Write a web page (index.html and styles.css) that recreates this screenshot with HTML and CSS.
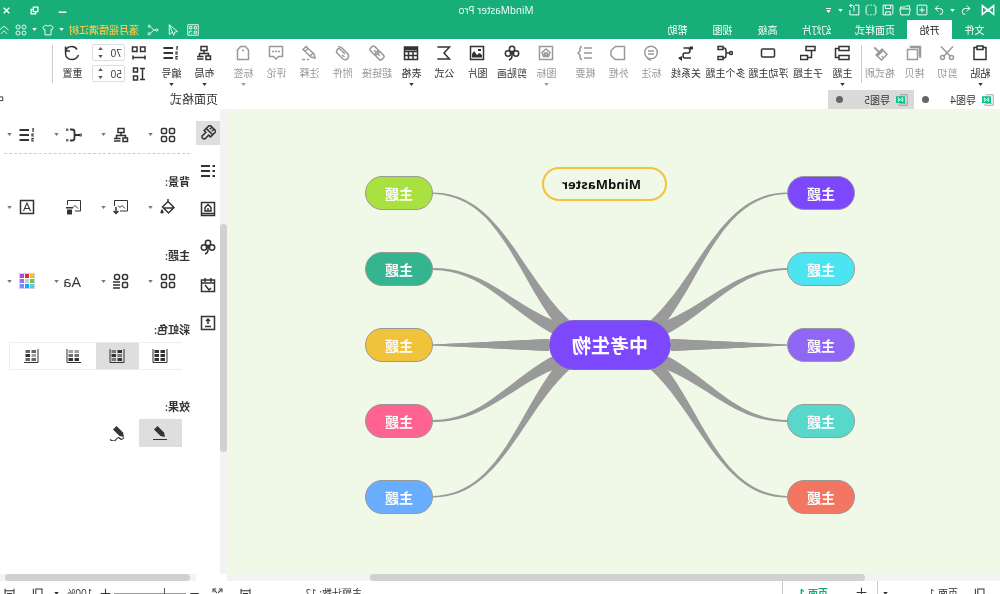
FILE: index.html
```html
<!DOCTYPE html>
<html lang="zh-CN">
<head>
<meta charset="utf-8">
<title>MindMaster Pro</title>
<link rel="stylesheet" href="styles.css">
</head>
<body>
<svg class="sprite" aria-hidden="true">
  <symbol id="logo" viewBox="0 0 16 16"><path d="M1.500 13V3l6.500 6 6.500-6v10L8 7.500zM1.500 3l13 10M14.500 3l-13 10" fill="none" stroke="currentColor" stroke-width="1.600"/></symbol>
  <symbol id="undo" viewBox="0 0 16 16"><path d="M7 2 3 6l4 4M3 6h6q4 0 4 4t-4 4"/></symbol>
  <symbol id="redo" viewBox="0 0 16 16"><path d="m9 2 4 4-4 4M13 6H7q-4 0-4 4t4 4"/></symbol>
  <symbol id="new" viewBox="0 0 16 16"><rect x="1.500" y="1.500" width="13" height="13" rx="1"/><path d="M8 4.500v7M4.500 8h7"/></symbol>
  <symbol id="open" viewBox="0 0 16 16"><path d="M2 6V2.500h4l1.500 1.500H14v2M1 6.500h14l-1.500 8h-11z"/></symbol>
  <symbol id="save" viewBox="0 0 16 16"><path d="M1.500 1.500h13v13h-11l-2-2zM4.500 1.500V6h7V1.500M5 14v-3.500h6V14"/></symbol>
  <symbol id="frame" viewBox="0 0 16 16"><path d="M5 1.500H3.500l-2 2v9l2 2H5M11 1.500h1.500l2 2v9l-2 2H11M7 1.500h2M7 14.500h2"/></symbol>
  <symbol id="export" viewBox="0 0 16 16"><path d="M7 1.500H1.500v13h12V8M8 10V4q0-2 2-2h3M11 0l3 2-3 3"/></symbol>
  <symbol id="paste" viewBox="0 0 16 16"><path d="M5 2.500H2v12h12v-12h-3M5 1h6v3.500H5z"/></symbol>
  <symbol id="cut" viewBox="0 0 16 16"><path d="m2 1.500 9 9.500M14 1.500 5 11"/><circle cx="3.500" cy="12.500" r="2"/><circle cx="12.500" cy="12.500" r="2"/></symbol>
  <symbol id="copy" viewBox="0 0 16 16"><path d="M3 12H1.500V1.500h10V3M1.500 2.500h10M2.500 2v9"/><rect x="4.500" y="4.500" width="10" height="10"/></symbol>
  <symbol id="brush" viewBox="0 0 16 16"><g transform="rotate(45 8 8)"><path class="f" d="M3 6h10v3H3zM7 0h2v6H7z"/><path d="M4 9v5h8V9"/><path d="M9 14v-3" stroke-width="1"/></g></symbol>
  <symbol id="topic" viewBox="0 0 16 16"><rect x="1" y="1.500" width="10" height="4"/><rect x="1" y="10.500" width="10" height="4"/><path d="M11 3.500h3.500v9H11"/></symbol>
  <symbol id="sub" viewBox="0 0 16 16"><rect x="1" y="1.500" width="9" height="4"/><rect x="8.500" y="10.500" width="7" height="4"/><path d="M4.500 6v6.500h4"/></symbol>
  <symbol id="float" viewBox="0 0 16 16"><rect x="1.500" y="4" width="13" height="8" rx="1"/></symbol>
  <symbol id="multi" viewBox="0 0 16 16"><rect x="10" y="1.500" width="5" height="3"/><rect x="10" y="11.500" width="5" height="3"/><circle cx="2" cy="8" r="1.500"/><path d="M3.500 8H7M10 3H9Q7 3 7 6v4q0 3 2 3h1"/></symbol>
  <symbol id="relation" viewBox="0 0 16 16"><path d="M2 3h8.500M10 3H6Q4 3 4 5.500T6 8h3q2 0 2 2.500T9 13H3M13 13h2"/><path class="f" d="M1 1.500h3v3H1zM12 11l4 2-4 3z"/></symbol>
  <symbol id="callout" viewBox="0 0 16 16"><circle cx="8" cy="7.500" r="6.300"/><path d="M5 6h6M5 9h6M9 13v2l3-2"/></symbol>
  <symbol id="boundary" viewBox="0 0 16 16"><path d="M1.500 1.500h9l4.500 4v5l-4 4H1.500z"/></symbol>
  <symbol id="summary" viewBox="0 0 16 16"><path d="M1 3h8M1 8h8M1 13h8M11 1.500q2 0 2 3V6l2 2-2 2v1.500q0 3-2 3"/></symbol>
  <symbol id="mark" viewBox="0 0 16 16"><rect x="1.500" y="1.500" width="13" height="13"/><path d="m8 4 4 3.500-1.500 4h-5L4 7.500zM6.500 8h3v2h-3z"/></symbol>
  <symbol id="clover" viewBox="0 0 16 16"><circle cx="8" cy="4" r="2.700"/><circle cx="4" cy="8.500" r="2.700"/><circle cx="12" cy="8.500" r="2.700"/><path d="M8 6v5q0 3 3 4M8 7 6 9M8 7l2 2"/></symbol>
  <symbol id="picture" viewBox="0 0 16 16"><rect x="1.500" y="1.500" width="13" height="13"/><path class="f" d="M3 12.500V10l2.500-2L8 10l3-4 2 3v3.500zM4 4h3v2H4z"/></symbol>
  <symbol id="sigma" viewBox="0 0 16 16"><path d="M14 2.500V2H2.500L8 8l-5.500 6H14v-.5"/></symbol>
  <symbol id="table" viewBox="0 0 16 16"><path d="M1.500 2h13v12.500h-13zM1.500 6.500h13M1.500 10.500h13M6 6v8M10.500 6v8M2 3h12M2 4.500h12"/></symbol>
  <symbol id="link" viewBox="0 0 16 16"><g transform="rotate(-45 8 8)"><rect x="0" y="5" width="9" height="6" rx="2"/><rect x="7" y="5" width="9" height="6" rx="2"/><path d="M4 8h8"/></g></symbol>
  <symbol id="clip" viewBox="0 0 16 16"><path d="m5 9 5-5q2-1 3 1t0 3l-6 6q-3 2-5-1-1-2 0-4l6-6q2-2 4-1M8 10 5.500 12"/></symbol>
  <symbol id="note" viewBox="0 0 16 16"><path d="m2 13 1-4 8-7.500 3 3L6 12zM9 3.500l3 3M4 8l3 3M8 14.500h2M12 14.500h3"/></symbol>
  <symbol id="comment" viewBox="0 0 16 16"><path d="M1.500 1.500h13v10h-4L8 14l-2.500-2.500h-4zM4 6.500h2M7 6.500h2M10 6.500h2"/></symbol>
  <symbol id="tag" viewBox="0 0 16 16"><path d="M2.500 5 5.500 1.500h5l3 3.500v9.500h-11zM7 5.500h2"/></symbol>
  <symbol id="layout" viewBox="0 0 16 16"><rect x="5" y="1.500" width="6" height="4"/><rect x="1.500" y="11" width="4.500" height="3.500"/><path d="M8 5.500v3M3.500 11V8.500h9V11M8.500 11.500H15M8.500 14H15"/></symbol>
  <symbol id="number" viewBox="0 0 16 16"><path d="M6 3h9.500M6 8h9.500M6 13h9.500" stroke-width="2.200"/><path d="M2 1v4M1 2h1M1 7h2v2H1M1 11.500h2V14H1" stroke-width="1.200"/></symbol>
  <symbol id="hgap" viewBox="0 0 16 16"><rect x="2" y="2" width="4.500" height="4.500"/><rect x="10" y="2" width="4.500" height="4.500"/><path d="M2 12.500h12M2 10.500v4M14 10.500v4"/></symbol>
  <symbol id="vgap" viewBox="0 0 16 16"><rect x="9.500" y="2" width="4" height="4"/><rect x="9.500" y="10" width="4" height="4"/><path d="M2 2.500h5M2 13.500h5M4.500 2.500v11"/></symbol>
  <symbol id="reset" viewBox="0 0 16 16"><path d="M3 4.500Q5 1.500 8 1.500q6.500 0 6.500 6.500T8 14.500Q3.500 14.500 1.500 10M14.500 1.500V6h-4.500"/></symbol>
  <symbol id="four" viewBox="0 0 16 16"><rect x="1.500" y="1.500" width="5" height="5" rx="1"/><rect x="9.500" y="1.500" width="5" height="5" rx="1"/><rect x="1.500" y="9.500" width="5" height="5" rx="1"/><rect x="9.500" y="9.500" width="5" height="5" rx="1"/></symbol>
  <symbol id="themes" viewBox="0 0 16 16"><rect x="1.500" y="1.500" width="5" height="5" rx="2"/><rect x="9.500" y="1.500" width="5" height="5" rx="2"/><rect x="1.500" y="9.500" width="5" height="5" rx="1"/><path d="M9 9h7M9 12h7M9 15h7"/></symbol>
  <symbol id="branch" viewBox="0 0 16 16"><path d="M2 8h5M12 2.500h-2q-2.500 0-2.500 2.500v6q0 2.500 2.500 2.500h2" stroke-width="1.800"/><path class="f" d="M13.500 1.500h2.500v2.500h-2.500zM13.500 12h2.500v2.500h-2.500zM0 6.500h2.500v3H0z" opacity=".7"/></symbol>
  <symbol id="fill" viewBox="0 0 16 16"><path d="m2 8.500 6-6 5.500 5.500-6 6zM8 2.500V0M2 9h11"/><path class="f" d="M14 10q3 4 0 4.500-3-.5 0-4.500z"/></symbol>
  <symbol id="picdown" viewBox="0 0 16 16"><path d="M9 12H1.500V1.500h13V7M4 9.500l3-3 2 2 2-2" stroke-width="1"/><path d="M13 8v6M10.500 12l2.500 2.500 2.500-2.500"/></symbol>
  <symbol id="picdel" viewBox="0 0 16 16"><path d="M7 12H1.500V1.500h13V6M4 9.500l3-3 2 2" stroke-width="1"/><path class="f" d="M9 8h7v1.500H9zM10 10.500h5v5h-5z"/></symbol>
  <symbol id="lettera" viewBox="0 0 16 16"><path d="M1.500 1.500h13v13h-13z"/><path d="m4.500 12 3.500-8 3.500 8M5.500 9.500h5" stroke-width="1.100"/></symbol>
  <symbol id="style" viewBox="0 0 16 16"><g transform="rotate(-45 8 8)"><path d="M3.500 1h9v8H10v5.500q-2 2-4 0V9H3.500zM3.500 6h9M6.500 1v3M9.500 1v3"/></g></symbol>
  <symbol id="list" viewBox="0 0 16 16"><path d="M6 3h9M6 8h9M6 13h9M1 3h2.500M1 8h2.500M1 13h2.500" stroke-width="2"/></symbol>
  <symbol id="book" viewBox="0 0 16 16"><path d="M1.500 1.500h13v13h-13zM1.500 12.500h13M5 10V6.500l3-3 3 3V10zM8 7v3"/></symbol>
  <symbol id="calendar" viewBox="0 0 16 16"><path d="M1.500 3h13v11.500h-13zM1.500 6h13M5 1v4M11 1v4M5 11l2 2 4-5"/></symbol>
  <symbol id="upload" viewBox="0 0 16 16"><path d="M1.500 1.500h13v13h-13zM8 9V4M6 6l2-2 2 2M5 11.500h6"/></symbol>
  <symbol id="cells" viewBox="0 0 16 16"><path d="M1 1v13.500h14V1" stroke-width="1"/><path class="f" d="M3 2h4.500v3H3zM9 2h4.500v3H9zM3 6h4.500v3H3zM9 6h4.500v3H9zM3 10h4.500v3H3zM9 10h4.500v3H9z"/></symbol>
  <symbol id="cellsmix" viewBox="0 0 16 16"><path d="M1 1v13.500h14V1" stroke-width="1"/><path class="f" d="M9 2h4.500v3H9zM3 6h4.500v3H3zM9 10h4.500v3H9z" opacity=".6"/><path class="f" d="M3 2h4.500v3H3zM9 6h4.500v3H9zM3 10h4.500v3H3z"/></symbol>
  <symbol id="cellsrow" viewBox="0 0 16 16"><path d="M1 14.500h14V1" stroke-width="1"/><path class="f" d="M3 2h4.500v3H3zM9 2h4.500v3H9z" opacity=".45"/><path class="f" d="M3 6h4.500v3H3zM9 6h4.500v3H9z" opacity=".7"/><path class="f" d="M3 10h4.500v3H3zM9 10h4.500v3H9z"/></symbol>
  <symbol id="cellscol" viewBox="0 0 16 16"><path d="M1 1v13.500h14" stroke-width="1"/><path class="f" d="M3 6h4.500v3H3z" opacity=".45"/><path class="f" d="M3 2h4.500v3H3zM9 2h4.500v3H9zM3 10h4.500v3H3zM9 10h4.500v3H9z" opacity=".75"/><path class="f" d="M9 6h4.500v3H9z"/></symbol>
  <symbol id="pencil" viewBox="0 0 16 16"><path class="f" d="m3 12 1-4.500 6.500-6.500 3.500 3.500-6.500 6.500z"/><path d="M1 14.500h14" stroke-width="1"/></symbol>
  <symbol id="scribble" viewBox="0 0 16 16"><path class="f" d="m1 12 1-4.500 6.500-6.500 3.500 3.500-6.500 6.500z"/><path d="M1 12.500q2 3 4 1t4 1 6 0" stroke-width="1.200"/></symbol>
  <symbol id="share" viewBox="0 0 16 16"><circle cx="3" cy="8" r="1.500"/><circle cx="13" cy="3" r="1.500"/><circle cx="13" cy="13" r="1.500"/><path d="M4.500 8H7l4.500-4.500M7 8l4.500 4.500"/></symbol>
  <symbol id="send" viewBox="0 0 16 16"><path d="M13 1 2 10l4 1 1 4zM13 1v13l-4-3"/></symbol>
  <symbol id="qr" viewBox="0 0 16 16"><path d="M1 1h14v14H1zM3.500 6.500v-3h3v3zM9.500 6.500v-3h3v3zM3.500 12.500v-3h3v3zM9 9.500h3.500v3M9 12.500h1"/></symbol>
  <symbol id="shirt" viewBox="0 0 16 16"><path d="m5 1.500-4 3L3 8l1-.5v7h8v-7l1 .5 2-3.500-4-3Q8 4.500 5 1.500z"/></symbol>
  <symbol id="apps" viewBox="0 0 16 16"><circle cx="4" cy="4" r="2.700"/><circle cx="12" cy="4" r="2.700"/><circle cx="4" cy="12" r="2.700"/><circle cx="12" cy="12" r="2.700"/></symbol>
  <symbol id="up" viewBox="0 0 16 16"><path d="m2 8 6-5 6 5M4 13l4-4 4 4"/></symbol>
  <symbol id="min" viewBox="0 0 16 16"><path d="M1 11h14" stroke-width="2.500"/></symbol>
  <symbol id="restore" viewBox="0 0 16 16"><path d="M2 2h8v8H2zM10 6h4v8H6v-4" stroke-width="2.400"/></symbol>
  <symbol id="close" viewBox="0 0 16 16"><path d="m3 3 10 10M13 3 3 13" stroke-width="2.600"/></symbol>
  <symbol id="doc" viewBox="0 0 16 16"><path d="M12 13v2H1V1h10" stroke="#888" stroke-width="1"/><path d="M3 12.500h8" stroke="#888" stroke-width="1"/><rect class="g" x="4" y="3" width="12" height="9"/><path d="M7 10V5l3 2.500L13 5v5L10 7.500z" stroke="#fff" stroke-width="1.100"/></symbol>
  <symbol id="caret" viewBox="0 0 6 4"><path class="f" d="M0 0h6L3 4z"/></symbol>
  <symbol id="caretup" viewBox="0 0 6 4"><path class="f" d="M0 4h6L3 0z"/></symbol>
  <symbol id="plus" viewBox="0 0 16 16"><path d="M8 1v14M1 8h14"/></symbol>
  <symbol id="minus" viewBox="0 0 16 16"><path d="M2 8h12"/></symbol>
  <symbol id="pages" viewBox="0 0 16 16"><path d="M1.500 1.500h9v13h-9zM14 1v14"/></symbol>
  <symbol id="fit" viewBox="0 0 16 16"><path d="M1.500 15V1M14.500 15V1M1.500 4h13M5 8h6v4H5z"/></symbol>
  <symbol id="full" viewBox="0 0 16 16"><path d="M1.500 6V1.500H6M10 1.500h4.500V6M1.500 10v4.500H6M10 14.500h4.500V10M5 5l2 2M11 5 9 7M3 3l2 2M13 3l-2 2"/></symbol>
  <symbol id="pin" viewBox="0 0 16 16"><path d="M2 3h12v6H2zM8 9v6"/></symbol>
</svg>

<div class="app">
  <header class="titlebar">
    <div class="quick">
      <svg class="ic logo"><use href="#logo"/></svg>
      <button aria-label="撤销"><svg class="ic"><use href="#undo"/></svg></button>
      <svg class="caret"><use href="#caret"/></svg>
      <button aria-label="重做"><svg class="ic"><use href="#redo"/></svg></button>
      <button aria-label="新建"><svg class="ic"><use href="#new"/></svg></button>
      <button aria-label="打开"><svg class="ic"><use href="#open"/></svg></button>
      <button aria-label="保存"><svg class="ic"><use href="#save"/></svg></button>
      <button aria-label="打印"><svg class="ic"><use href="#frame"/></svg></button>
      <button aria-label="导出"><svg class="ic"><use href="#export"/></svg></button>
      <svg class="caret"><use href="#caret"/></svg>
      <button class="more" aria-label="更多"><svg class="caret"><use href="#caret"/></svg></button>
    </div>
    <h1>MindMaster Pro</h1>
    <div class="window">
      <button aria-label="最小化"><svg class="ic"><use href="#min"/></svg></button>
      <button aria-label="还原"><svg class="ic"><use href="#restore"/></svg></button>
      <button aria-label="关闭"><svg class="ic"><use href="#close"/></svg></button>
    </div>
  </header>
  <nav class="menu">
    <div class="tabs">
      <button>文件</button>
      <button class="on">开始</button>
      <button class="w4">页面样式</button>
      <button class="w3">幻灯片</button>
      <button>高级</button>
      <button>视图</button>
      <button>帮助</button>
    </div>
    <div class="account">
      <div class="links">
        <button aria-label="二维码"><svg class="ic"><use href="#qr"/></svg></button>
        <button aria-label="发送"><svg class="ic"><use href="#send"/></svg></button>
        <button aria-label="分享"><svg class="ic"><use href="#share"/></svg></button>
      </div>
      <button class="user">落月摇情满江树</button>
      <svg class="caret"><use href="#caret"/></svg>
      <button aria-label="皮肤"><svg class="ic"><use href="#shirt"/></svg></button>
      <svg class="caret"><use href="#caret"/></svg>
      <button aria-label="应用"><svg class="ic"><use href="#apps"/></svg></button>
      <button class="fold" aria-label="收起"><svg class="ic"><use href="#up"/></svg></button>
    </div>
  </nav>

  <div class="ribbon">
    <div class="group clipboard">
      <button><svg class="ic"><use href="#paste"/></svg>粘贴<svg class="caret"><use href="#caret"/></svg></button>
      <button class="off"><svg class="ic"><use href="#cut"/></svg>剪切</button>
      <button class="off"><svg class="ic"><use href="#copy"/></svg>拷贝</button>
      <button class="off w3"><svg class="ic"><use href="#brush"/></svg>格式刷</button>
    </div>
    <div class="group topics">
      <button><svg class="ic"><use href="#topic"/></svg>主题<svg class="caret"><use href="#caret"/></svg></button>
      <button class="w3"><svg class="ic"><use href="#sub"/></svg>子主题</button>
      <button class="w4"><svg class="ic"><use href="#float"/></svg>浮动主题</button>
      <button class="w4"><svg class="ic"><use href="#multi"/></svg>多个主题</button>
      <button class="w3"><svg class="ic"><use href="#relation"/></svg>关系线</button>
      <button class="off"><svg class="ic"><use href="#callout"/></svg>标注</button>
      <button class="off"><svg class="ic"><use href="#boundary"/></svg>外框</button>
      <button class="off"><svg class="ic"><use href="#summary"/></svg>概要</button>
    </div>
    <div class="group insert">
      <button class="off"><svg class="ic"><use href="#mark"/></svg>图标<svg class="caret"><use href="#caret"/></svg></button>
      <button class="w3"><svg class="ic"><use href="#clover"/></svg>剪贴画</button>
      <button><svg class="ic"><use href="#picture"/></svg>图片</button>
      <button><svg class="ic"><use href="#sigma"/></svg>公式</button>
      <button><svg class="ic"><use href="#table"/></svg>表格<svg class="caret"><use href="#caret"/></svg></button>
      <button class="off w3"><svg class="ic"><use href="#link"/></svg>超链接</button>
      <button class="off"><svg class="ic"><use href="#clip"/></svg>附件</button>
      <button class="off"><svg class="ic"><use href="#note"/></svg>注释</button>
      <button class="off"><svg class="ic"><use href="#comment"/></svg>评论</button>
      <button class="off"><svg class="ic"><use href="#tag"/></svg>标签<svg class="caret"><use href="#caret"/></svg></button>
    </div>
    <div class="group arrange">
      <button><svg class="ic"><use href="#layout"/></svg>布局<svg class="caret"><use href="#caret"/></svg></button>
      <button><svg class="ic"><use href="#number"/></svg>编号<svg class="caret"><use href="#caret"/></svg></button>
      <div class="spacing">
        <label><svg class="ic"><use href="#hgap"/></svg><span class="spin"><input type="text" value="70" aria-label="水平间距"><span class="arrows"><svg class="caret"><use href="#caretup"/></svg><svg class="caret"><use href="#caret"/></svg></span></span></label>
        <label><svg class="ic"><use href="#vgap"/></svg><span class="spin"><input type="text" value="50" aria-label="垂直间距"><span class="arrows"><svg class="caret"><use href="#caretup"/></svg><svg class="caret"><use href="#caret"/></svg></span></span></label>
      </div>
      <button><svg class="ic"><use href="#reset"/></svg>重置</button>
    </div>
  </div>

  <main class="work">
    <section class="editor">
      <div class="docs">
        <button><svg class="ic"><use href="#doc"/></svg>导图4<i></i></button>
        <button class="on"><svg class="ic"><use href="#doc"/></svg>导图5<i></i></button>
      </div>
      <div class="canvas">
        <svg class="lines" viewBox="-390 -236 772 465" aria-hidden="true">
          <defs>
            <g id="arms">
              <path d="M177-152.500C110-152.500 90-70 40-24L30-10H48L57-24C95-75 113-149 177-151z"/>
              <path d="M177-77C125-77 100-42 55-24L35-10 59-12C105-38 127-74 177-75z"/>
              <path d="M177-.5 61-6V6L177 .5z"/>
            </g>
          </defs>
          <use href="#arms"/>
          <use href="#arms" transform="scale(-1 1)"/>
          <use href="#arms" transform="scale(1 -1)"/>
          <use href="#arms" transform="scale(-1 -1)"/>
        </svg>
        <div class="node float">MindMaster</div>
        <div class="node root">中考生物</div>
        <div class="node l r1 violet">主题</div>
        <div class="node l r2 cyan">主题</div>
        <div class="node l r3 purple">主题</div>
        <div class="node l r4 teal">主题</div>
        <div class="node l r5 coral">主题</div>
        <div class="node r r1 lime">主题</div>
        <div class="node r r2 green">主题</div>
        <div class="node r r3 gold">主题</div>
        <div class="node r r4 pink">主题</div>
        <div class="node r r5 blue">主题</div>
      </div>
      <div class="hscroll"><span></span></div>
    </section>

    <aside class="panel">
      <header><h2>页面格式</h2><svg class="ic"><use href="#pin"/></svg></header>
      <div class="body">
        <div class="vscroll"><span></span></div>
        <div class="rail">
          <button class="on" aria-label="格式"><svg class="ic"><use href="#style"/></svg></button>
          <button aria-label="大纲"><svg class="ic"><use href="#list"/></svg></button>
          <button aria-label="图标"><svg class="ic"><use href="#book"/></svg></button>
          <button aria-label="剪贴画"><svg class="ic"><use href="#clover"/></svg></button>
          <button aria-label="任务"><svg class="ic"><use href="#calendar"/></svg></button>
          <button aria-label="导出"><svg class="ic"><use href="#upload"/></svg></button>
        </div>
        <div class="format">
          <div class="row first">
            <button aria-label="结构"><svg class="ic"><use href="#four"/></svg><svg class="caret"><use href="#caret"/></svg></button>
            <button aria-label="布局"><svg class="ic"><use href="#layout"/></svg><svg class="caret"><use href="#caret"/></svg></button>
            <button aria-label="连线"><svg class="ic"><use href="#branch"/></svg><svg class="caret"><use href="#caret"/></svg></button>
            <button aria-label="编号"><svg class="ic"><use href="#number"/></svg><svg class="caret"><use href="#caret"/></svg></button>
          </div>
          <h3>背景:</h3>
          <div class="row">
            <button aria-label="填充"><svg class="ic"><use href="#fill"/></svg><svg class="caret"><use href="#caret"/></svg></button>
            <button aria-label="插入图片"><svg class="ic"><use href="#picdown"/></svg><svg class="caret"><use href="#caret"/></svg></button>
            <button aria-label="删除图片"><svg class="ic"><use href="#picdel"/></svg></button>
            <button aria-label="水印"><svg class="ic"><use href="#lettera"/></svg><svg class="caret"><use href="#caret"/></svg></button>
          </div>
          <h3>主题:</h3>
          <div class="row">
            <button aria-label="主题"><svg class="ic"><use href="#four"/></svg><svg class="caret"><use href="#caret"/></svg></button>
            <button aria-label="主题样式"><svg class="ic"><use href="#themes"/></svg><svg class="caret"><use href="#caret"/></svg></button>
            <button aria-label="字体"><span class="aa">Aa</span><svg class="caret"><use href="#caret"/></svg></button>
            <button aria-label="颜色"><span class="swatch"><i></i><i></i><i></i><i></i><i></i><i></i><i></i><i></i><i></i></span><svg class="caret"><use href="#caret"/></svg></button>
          </div>
          <h3>彩虹色:</h3>
          <div class="choices boxed">
            <button aria-label="单色"><svg class="ic"><use href="#cells"/></svg></button>
            <button class="on" aria-label="彩虹一"><svg class="ic"><use href="#cellsmix"/></svg></button>
            <button aria-label="彩虹二"><svg class="ic"><use href="#cellsrow"/></svg></button>
            <button aria-label="彩虹三"><svg class="ic"><use href="#cellscol"/></svg></button>
          </div>
          <h3>效果:</h3>
          <div class="choices">
            <button class="on" aria-label="普通"><svg class="ic"><use href="#pencil"/></svg></button>
            <button aria-label="手绘"><svg class="ic"><use href="#scribble"/></svg></button>
          </div>
        </div>
      </div>
      <div class="hscroll"><span></span></div>
    </aside>
  </main>

  <footer class="status">
    <div class="pages">
      <svg class="ic"><use href="#pages"/></svg>
      <span>页面-1</span>
      <svg class="caret"><use href="#caret"/></svg>
      <button class="add" aria-label="新增页面"><svg class="ic"><use href="#plus"/></svg></button>
      <button class="current">页面-1</button>
    </div>
    <div class="tools">
      <span class="count">主题计数: 12</span>
      <div class="view">
        <button aria-label="适合宽度"><svg class="ic"><use href="#fit"/></svg></button>
        <button aria-label="全屏"><svg class="ic"><use href="#full"/></svg></button>
      </div>
      <div class="zoom">
        <button aria-label="缩小"><svg class="ic"><use href="#minus"/></svg></button>
        <input type="range" min="0" max="100" value="30" aria-label="缩放">
        <button aria-label="放大"><svg class="ic"><use href="#plus"/></svg></button>
      </div>
      <span>100%</span>
      <svg class="caret"><use href="#caret"/></svg>
      <div class="view">
        <button aria-label="视图"><svg class="ic"><use href="#pages"/></svg></button>
        <button aria-label="定位"><svg class="ic"><use href="#fit"/></svg></button>
      </div>
    </div>
  </footer>
</div>
</body>
</html>
```
FILE: styles.css
```css
* { box-sizing: border-box; }

body {
  margin: 0;
  overflow: hidden;
  background: #fff;
  color: #333;
  font: 10px/14px "Open Sans", "Noto Sans CJK SC", sans-serif;
}

button {
  padding: 0;
  border: 0;
  background: none;
  color: inherit;
  font: inherit;
  white-space: nowrap;
}

h1, h2, h3 { margin: 0; font-weight: 400; }

.sprite { position: absolute; width: 0; height: 0; }

/* The whole interface is shown flipped left to right. */
.app {
  display: flex;
  flex-direction: column;
  height: 100vh;
  overflow: hidden;
  transform: scaleX(-1);
}

.ic {
  display: block;
  flex: none;
  width: 16px;
  height: 16px;
  fill: none;
  stroke: currentColor;
  stroke-width: 1.5;
}
.caret {
  display: block;
  flex: none;
  width: 5px;
  height: 3px;
}
.f { fill: currentColor; stroke: none; }
.g { fill: #0bbd87; stroke: none; }

/* Title bar and menu */
.titlebar {
  display: grid;
  grid-template-columns: 1fr auto 1fr;
  align-items: center;
  height: 20px;
  background: #17ae79;
  color: #fff;
}
.titlebar .ic { width: 12px; height: 12px; stroke-width: 1.3; }
.titlebar h1 { padding-left: 8px; font-size: 10px; line-height: 20px; }
.quick { display: flex; align-items: center; gap: 5px; padding-left: 5px; }
.quick .logo { width: 14px; height: 14px; margin-right: 4px; }
.more { padding-top: 1px; border-top: 1px solid #fff; margin-left: 2px; }
.window { display: flex; justify-content: flex-end; gap: 19px; padding-right: 2px; }
.titlebar .window .ic { width: 9px; height: 9px; }

.menu {
  display: flex;
  justify-content: space-between;
  height: 19px;
  background: #17ae79;
  color: #fff;
}
.tabs { display: flex; padding-left: 3px; }
.tabs button { width: 45px; }
.tabs .w3 { width: 53px; }
.tabs .w4 { width: 64px; }
.tabs .on { background: #fff; color: #222; }
.account { display: flex; align-items: center; gap: 5px; }
.links { display: flex; gap: 8px; margin-right: 3px; }
.account .ic { width: 12px; height: 12px; stroke-width: 1.2; }
.account .user { color: #fbc94f; font-weight: 500; }
.account .fold { width: 10px; }

/* Ribbon */
.ribbon { display: flex; height: 51px; padding: 6px 0 0 3px; }
.group { display: flex; align-items: flex-start; }
.group > button {
  display: flex;
  flex-direction: column;
  align-items: center;
  width: 33px;
}
.group > .w3 { width: 36px; }
.group > .w4 { width: 43px; }
.group > button .ic { margin-bottom: 5px; }
.group > button .caret { margin-top: 3px; }
.off { color: #999; }
.clipboard, .arrange { height: 38px; border-right: 1px solid #ccc; }
.topics { margin-left: 2px; }
.insert { margin-left: 6px; }
.arrange { margin-left: 6px; padding-right: 3px; }
.spacing { display: grid; gap: 4px; margin: -1px 0 0 8px; }
.spacing label { display: flex; align-items: center; gap: 6px; }
.spin {
  display: flex;
  align-items: center;
  width: 33px;
  height: 17px;
  border: 1px solid #ddd;
  border-radius: 2px;
}
.spin input {
  width: 21px;
  padding: 0 0 0 2px;
  border: 0;
  background: none;
  color: #333;
  font: inherit;
}
.arrows { display: grid; gap: 5px; color: #555; }
.spacing + button { margin-left: 3px; }

/* Editor */
.work { display: flex; flex: 1; min-height: 0; }
.editor { display: flex; flex: 1; flex-direction: column; min-width: 0; }
.docs { display: flex; height: 19px; }
.docs button { display: flex; align-items: center; width: 86px; padding: 0 8px 0 6px; }
.docs .ic { width: 12px; height: 12px; margin-right: 6px; }
.docs .on { background: #dadada; }
.docs i {
  width: 7px;
  height: 7px;
  margin-left: auto;
  border-radius: 50%;
  background: #666;
}
.canvas {
  position: relative;
  flex: 1;
  min-height: 0;
  overflow: hidden;
  background: #f0f9e8;
}
.lines { position: absolute; top: 0; left: 0; width: 772px; height: 465px; fill: #9a9a9a; }
.node {
  position: absolute;
  width: 68px;
  height: 34px;
  border: 1px solid #999;
  border-radius: 25px;
  color: #fff;
  font-size: 14px;
  font-weight: 700;
  line-height: 34px;
  text-align: center;
}
.node.root {
  left: 329px;
  top: 211px;
  width: 122px;
  height: 50px;
  border-color: #8064c8;
  background: #7d48fb;
  font-size: 19px;
  line-height: 50px;
}
.node.float {
  left: 333px;
  top: 58px;
  width: 125px;
  border: 2px solid #f1c33b;
  padding-left: 6px;
  color: #111;
  font-size: 13px;
  line-height: 30px;
}
.l { left: 145px; }
.r { left: 567px; }
.r1 { top: 67px; }
.r2 { top: 143px; }
.r3 { top: 219px; }
.r4 { top: 295px; }
.r5 { top: 371px; }
.violet { background: #7d48fb; }
.cyan { background: #4de4f1; }
.purple { background: #8f66f5; }
.teal { background: #57d8ca; }
.coral { background: #f37663; }
.lime { background: #a9e141; }
.green { background: #35b58f; }
.gold { background: #f1c33b; }
.pink { background: #ff6490; }
.blue { background: #68adff; }

.hscroll { height: 7px; background: #f3f3f3; }
.hscroll span { display: block; height: 7px; border-radius: 4px; background: #d1d1d1; }
.editor .hscroll span { width: 64%; margin-left: 135px; }

/* Format panel */
.panel { display: flex; flex: none; flex-direction: column; width: 227px; overflow: hidden; }
.panel header { display: flex; justify-content: space-between; height: 19px; padding-left: 9px; }
.panel h2 { font-size: 12px; line-height: 20px; }
.panel header .ic { width: 10px; height: 10px; margin: 5px -6px 0 0; }
.body { display: flex; flex: 1; min-height: 0; }
.vscroll { flex: none; width: 7px; padding-top: 115px; background: #f3f3f3; }
.vscroll span { display: block; height: 228px; border-radius: 4px; background: #d1d1d1; }
.rail {
  display: flex;
  flex: none;
  flex-direction: column;
  gap: 14px;
  width: 24px;
  padding-top: 12px;
}
.rail button { display: grid; place-items: center; height: 24px; }
.on { background: #dedede; }
.format { flex: 1; min-width: 0; padding-left: 6px; }
.row { display: grid; grid-template-columns: repeat(4, 47px); height: 24px; padding-left: 14px; }
.row button { display: flex; align-items: center; gap: 7px; }
.row .caret { color: #777; }
.row.first { height: 45px; margin: 0 4px 20px 0; padding-top: 7px; border-bottom: 1px dashed #ccc; }
.format h3 { font-size: 11px; font-weight: 600; line-height: 16px; }
.row + h3 { margin-top: 20px; }
.row + h3 + .row { margin-top: 5px; }
.row + h3 + .row + h3 { margin-top: 29px; }
.aa { width: 20px; margin-right: -4px; font-size: 15px; }
.swatch {
  display: grid;
  grid-template-columns: repeat(3, 4px);
  gap: 1px;
  width: 16px;
  height: 16px;
  border: 1px solid #c9d3ea;
}
.swatch i { background: #f1c40f; }
.swatch i:nth-child(2) { background: #e0245e; }
.swatch i:nth-child(3) { background: #b54bd2; }
.swatch i:nth-child(4) { background: #76c442; }
.swatch i:nth-child(5) { background: #ccc; }
.swatch i:nth-child(6) { background: #9370f0; }
.swatch i:nth-child(7) { background: #5bc8dc; }
.swatch i:nth-child(8) { background: #00b0ff; }
.swatch i:nth-child(9) { background: #7a8cff; }
.choices { display: flex; width: 173px; height: 28px; margin: 4px 0 0 8px; }
.choices button { display: grid; flex: 0 0 43px; place-items: center; }
.choices + h3 { margin-top: 29px; }
.boxed { border: 1px solid #eee; border-left: 0; }
.panel .hscroll { margin-left: 31px; padding: 0 5px 0 6px; }

/* Status bar: its lower half runs past the window edge */
.status {
  display: flex;
  justify-content: space-between;
  height: 13px;
  overflow: hidden;
}
.pages, .tools { display: flex; align-items: center; height: 24px; }
.status .ic { width: 11px; height: 11px; }
.pages { width: 218px; padding-left: 15px; border-right: 1px solid #ccc; }
.pages span { width: 70px; margin-left: 16px; }
.add { margin-left: 5px; padding: 6px 0 7px 10px; border-left: 1px solid #ccc; }
.current { margin-left: 28px; color: #17ae79; font-weight: 700; }
.tools { gap: 8px; padding-right: 4px; }
.count { margin-right: 46px; }
.view { display: flex; gap: 17px; margin-right: 4px; }
.caret + .view { margin: 0 0 0 3px; }
.zoom { display: flex; align-items: center; gap: 3px; }
.zoom input {
  appearance: none;
  width: 72px;
  height: 11px;
  margin: 0;
  background: linear-gradient(#999, #999) center / 100% 1px no-repeat;
}
.zoom input::-webkit-slider-thumb {
  appearance: none;
  width: 1px;
  height: 11px;
  background: #555;
}
```
